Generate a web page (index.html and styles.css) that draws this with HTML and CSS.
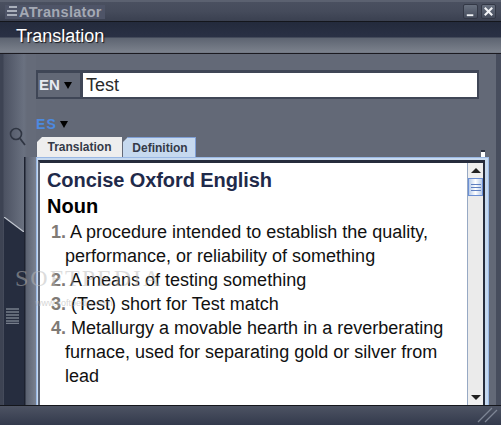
FILE: index.html
```html
<!DOCTYPE html>
<html lang="en">
<head>
<meta charset="utf-8">
<title>ATranslator</title>
<link rel="stylesheet" href="styles.css">
</head>
<body>
<div class="window">
  <header class="titlebar">
    <div class="brand">
      <svg class="brand-icon" width="12" height="11" viewBox="0 0 12 11"><path d="M3 0h8v2H3zM1 4h10v2H1zM1 8h10v2H1z" fill="#a9afba"/></svg>
      <span class="brand-name">ATranslator</span>
    </div>
    <div class="controls">
      <span class="ctl"><svg width="13" height="13" viewBox="0 0 14 14"><path d="M3 10h7v2H3z" fill="#f2f4f7"/></svg></span>
      <span class="ctl"><svg width="13" height="13" viewBox="0 0 14 14"><path d="M3 3l8 8M11 3l-8 8" stroke="#f2f4f7" stroke-width="2.2"/></svg></span>
    </div>
  </header>
  <div class="heading"><span class="heading-text">Translation</span></div>
  <div class="body">
    <aside class="rail">
      <svg class="search" width="20" height="22" viewBox="0 0 20 22"><circle cx="8" cy="7" r="5.5" fill="none" stroke="#2f3542" stroke-width="1.6"/><path d="M12 11.500l5 6.500" stroke="#2f3542" stroke-width="1.8"/></svg>
      <div class="rail-strip"></div>
      <div class="rail-tab">
        <svg class="grip" width="13" height="16" viewBox="0 0 13 16"><path d="M0 1h13M0 4h13M0 7h13M0 10h13M0 13h13M0 15.500h13" stroke="#767d8b" stroke-width="1.500"/></svg>
      </div>
      <svg class="rail-edge" width="20" height="15" viewBox="0 0 20 15"><path d="M0 0L20 15" stroke="#c4c9d2" stroke-width="1.200"/></svg>
    </aside>
    <main class="main">
      <div class="source-row">
        <div class="lang-box"><span class="lang">EN</span><span class="arrow"></span></div>
        <div class="input">Test</div>
      </div>
      <div class="target-row"><span class="lang-target">ES</span><span class="arrow"></span></div>
      <div class="tabs">
        <span class="tab">Translation</span>
        <span class="tab tab-active">Definition</span>
      </div>
      <div class="panel">
        <span class="notch"></span>
        <div class="panel-inner">
          <div class="content">
            <h1 class="dict">Concise Oxford English</h1>
            <h2 class="pos">Noun</h2>
            <ol class="defs">
              <li><span class="num">1.</span> A procedure intended to establish the quality, performance, or reliability of something</li>
              <li><span class="num">2.</span> A means of testing something</li>
              <li><span class="num">3.</span> (Test) short for Test match</li>
              <li><span class="num">4.</span> Metallurgy a movable hearth in a reverberating furnace, used for separating gold or silver from lead</li>
            </ol>
          </div>
          <div class="scrollbar">
            <span class="sb-btn"><span class="tri-up"></span></span>
            <span class="thumb"><i></i><i></i><i></i></span>
            <span class="sb-track"></span>
            <span class="sb-btn"><span class="tri-down"></span></span>
          </div>
        </div>
      </div>
    </main>
  </div>
  <footer class="footer">
    <svg class="resize" width="22" height="16" viewBox="0 0 22 16"><path d="M2 15L16 1M9 15L21 3" stroke="#7d8594" stroke-width="1.300"/></svg>
  </footer>
  <div class="watermark">SOFTPEDIA</div>
  <div class="watermark-url">www.softpedia.com</div>
</div>
</body>
</html>
```
FILE: styles.css
```css
* { box-sizing: border-box; }
html, body { margin: 0; padding: 0; }
body { width: 501px; height: 425px; overflow: hidden; font-family: "Liberation Sans", Arial, sans-serif; background: #555b69; }
.window { position: relative; width: 501px; height: 425px; display: flex; flex-direction: column; background: #636977; overflow: hidden; }

.titlebar { height: 22px; flex: none; display: flex; justify-content: space-between; align-items: center; padding: 0 5px 0 5px; background: linear-gradient(#4a5060, #454b5b 50%, #3a4050); border-top: 2px solid #5b6170; border-bottom: 1px solid #14161c; }
.brand { display: flex; align-items: center; width: 100px; height: 14px; background: #4e5467; }
.brand-icon { margin-left: 1px; flex: none; }
.brand-name { font-size: 14.500px; font-weight: bold; color: #a4a9b4; letter-spacing: 0.300px; margin-left: 1px; }
.controls { display: flex; gap: 3px; }
.ctl { width: 15px; height: 15px; display: flex; align-items: center; justify-content: center; background: linear-gradient(#68707f, #444b5b); border: 1px solid #333846; border-radius: 2px; }

.heading { height: 32px; flex: none; display: flex; align-items: flex-start; padding: 4px 0 0 16px; background: linear-gradient(#232a3c 0, #2a3145 15px, #5d6471 16px, #7b818c 30px, #6a707d 31px); border-bottom: 1px solid #1b1a20; }
.heading-text { font-size: 18px; line-height: 20px; color: #fff; text-shadow: 1px 1px 1px #14161c; }

.body { flex: 1; display: flex; min-height: 0; }
.rail { width: 36px; flex: none; position: relative; background: linear-gradient(90deg, #3d4353 0, #3d4353 3px, #4c5262 4px, #6a7180 24px, #656b79 27px); }
.search { position: absolute; left: 8px; top: 73px; }
.rail-strip { position: absolute; left: 24px; top: 103px; bottom: 0; width: 12px; background: linear-gradient(90deg, #1d2230 0, #1d2230 1px, #5a6170 2px, #7a8190); }
.rail-tab { position: absolute; left: 4px; top: 163px; bottom: 0; width: 20px; background: #262d3f; clip-path: polygon(0 0, 20px 15px, 20px 100%, 0 100%); }
.rail-edge { position: absolute; left: 4px; top: 163px; }
.grip { display: block; margin: 91px 0 0 2px; }

.main { flex: 1; display: flex; flex-direction: column; padding-top: 16px; min-width: 0; border-right: 5px solid #474d5d; }
.source-row { display: flex; height: 29px; width: 443px; flex: none; background: #3f4656; padding: 3px 2px 2px 2px; align-items: stretch; gap: 3px; }
.lang-box { width: 42px; display: flex; align-items: center; gap: 4px; padding-left: 1px; background: #626876; }
.lang { font-size: 15px; font-weight: bold; color: #e8ebf2; line-height: 20px; }
.arrow { width: 0; height: 0; border-left: 4.500px solid transparent; border-right: 4.500px solid transparent; border-top: 7px solid #000; display: inline-block; }
.input { flex: 1; background: #fff; font-size: 18px; line-height: 24px; padding: 0 0 0 3px; color: #2a2a2a; }
.target-row { display: flex; align-items: center; gap: 3px; height: 16px; margin-top: 17px; flex: none; }
.lang-target { font-size: 14px; font-weight: bold; color: #4d8ae0; letter-spacing: 1.200px; }
.tabs { display: flex; gap: 1px; height: 20px; margin-top: 5px; margin-left: 1px; flex: none; }
.tab { width: 85px; height: 20px; display: flex; align-items: center; justify-content: center; font-size: 12px; font-weight: bold; color: #343a48; background: #eeeeee; clip-path: polygon(5px 0, 100% 0, 100% 100%, 0 100%, 0 5px); }
.tab-active { width: 73px; padding-left: 2px; background: #c6d9ef; border-top: 1px solid #7f9fd6; border-right: 1px solid #7f9fd6; }

.panel { flex: 1; position: relative; display: flex; width: 453px; min-height: 0; background: #c6d9ef; border: 1px solid #9ab8e4; border-bottom: 0; padding: 2px 3px 0 1px; }
.notch { position: absolute; right: 3px; top: -8px; width: 4px; height: 7px; background: #fff; border-top: 2px solid #2c3240; }
.panel-inner { flex: 1; display: flex; min-width: 0; background: #fff; border-top: 3px solid #262c3c; border-left: 2px solid #5b6272; border-right: 2px solid #262c3c; }
.content { flex: 1; padding: 4px 0 0 7px; min-width: 0; }
.dict { margin: 0; font-size: 20px; font-weight: bold; line-height: 26px; color: #1f2a4a; letter-spacing: -0.080px; }
.pos { margin: 0; font-size: 20px; font-weight: bold; line-height: 26px; color: #000; }
.defs { list-style: none; margin: 1px 0 0 0; padding: 0 0 0 18px; font-size: 18px; line-height: 24px; color: #111; width: 404px; }
.defs li { text-indent: -14px; }
.num { font-weight: bold; color: #7f7a75; }

.scrollbar { width: 16px; flex: none; display: flex; flex-direction: column; background: #ebebeb; border-left: 1px solid #97a9c4; }
.sb-btn { height: 15px; flex: none; display: flex; align-items: center; justify-content: center; background: #efefef; }
.tri-up { border-left: 5px solid transparent; border-right: 5px solid transparent; border-bottom: 5px solid #222; }
.tri-down { border-left: 5px solid transparent; border-right: 5px solid transparent; border-top: 5px solid #222; }
.thumb { height: 18px; flex: none; display: flex; flex-direction: column; gap: 2px; align-items: center; justify-content: center; background: linear-gradient(90deg, #b8cbe8, #fff 50%, #b8cbe8); border: 1px solid #6b8fd4; }
.thumb i { display: block; width: 10px; height: 1px; background: #5f7fc0; }
.sb-track { flex: 1; }

.footer { height: 20px; flex: none; display: flex; justify-content: flex-end; align-items: flex-end; padding: 0 3px 2px 0; background: linear-gradient(#4d5363, #333a4c); border-top: 1px solid #14161c; }

.watermark { position: absolute; left: 15px; top: 265px; font-family: "Liberation Serif", serif; font-size: 24px; letter-spacing: 2px; color: rgba(185,185,185,0.5); pointer-events: none; }
.watermark-url { position: absolute; left: 35px; top: 298px; font-size: 9px; color: rgba(170,170,170,0.5); pointer-events: none; }
```
